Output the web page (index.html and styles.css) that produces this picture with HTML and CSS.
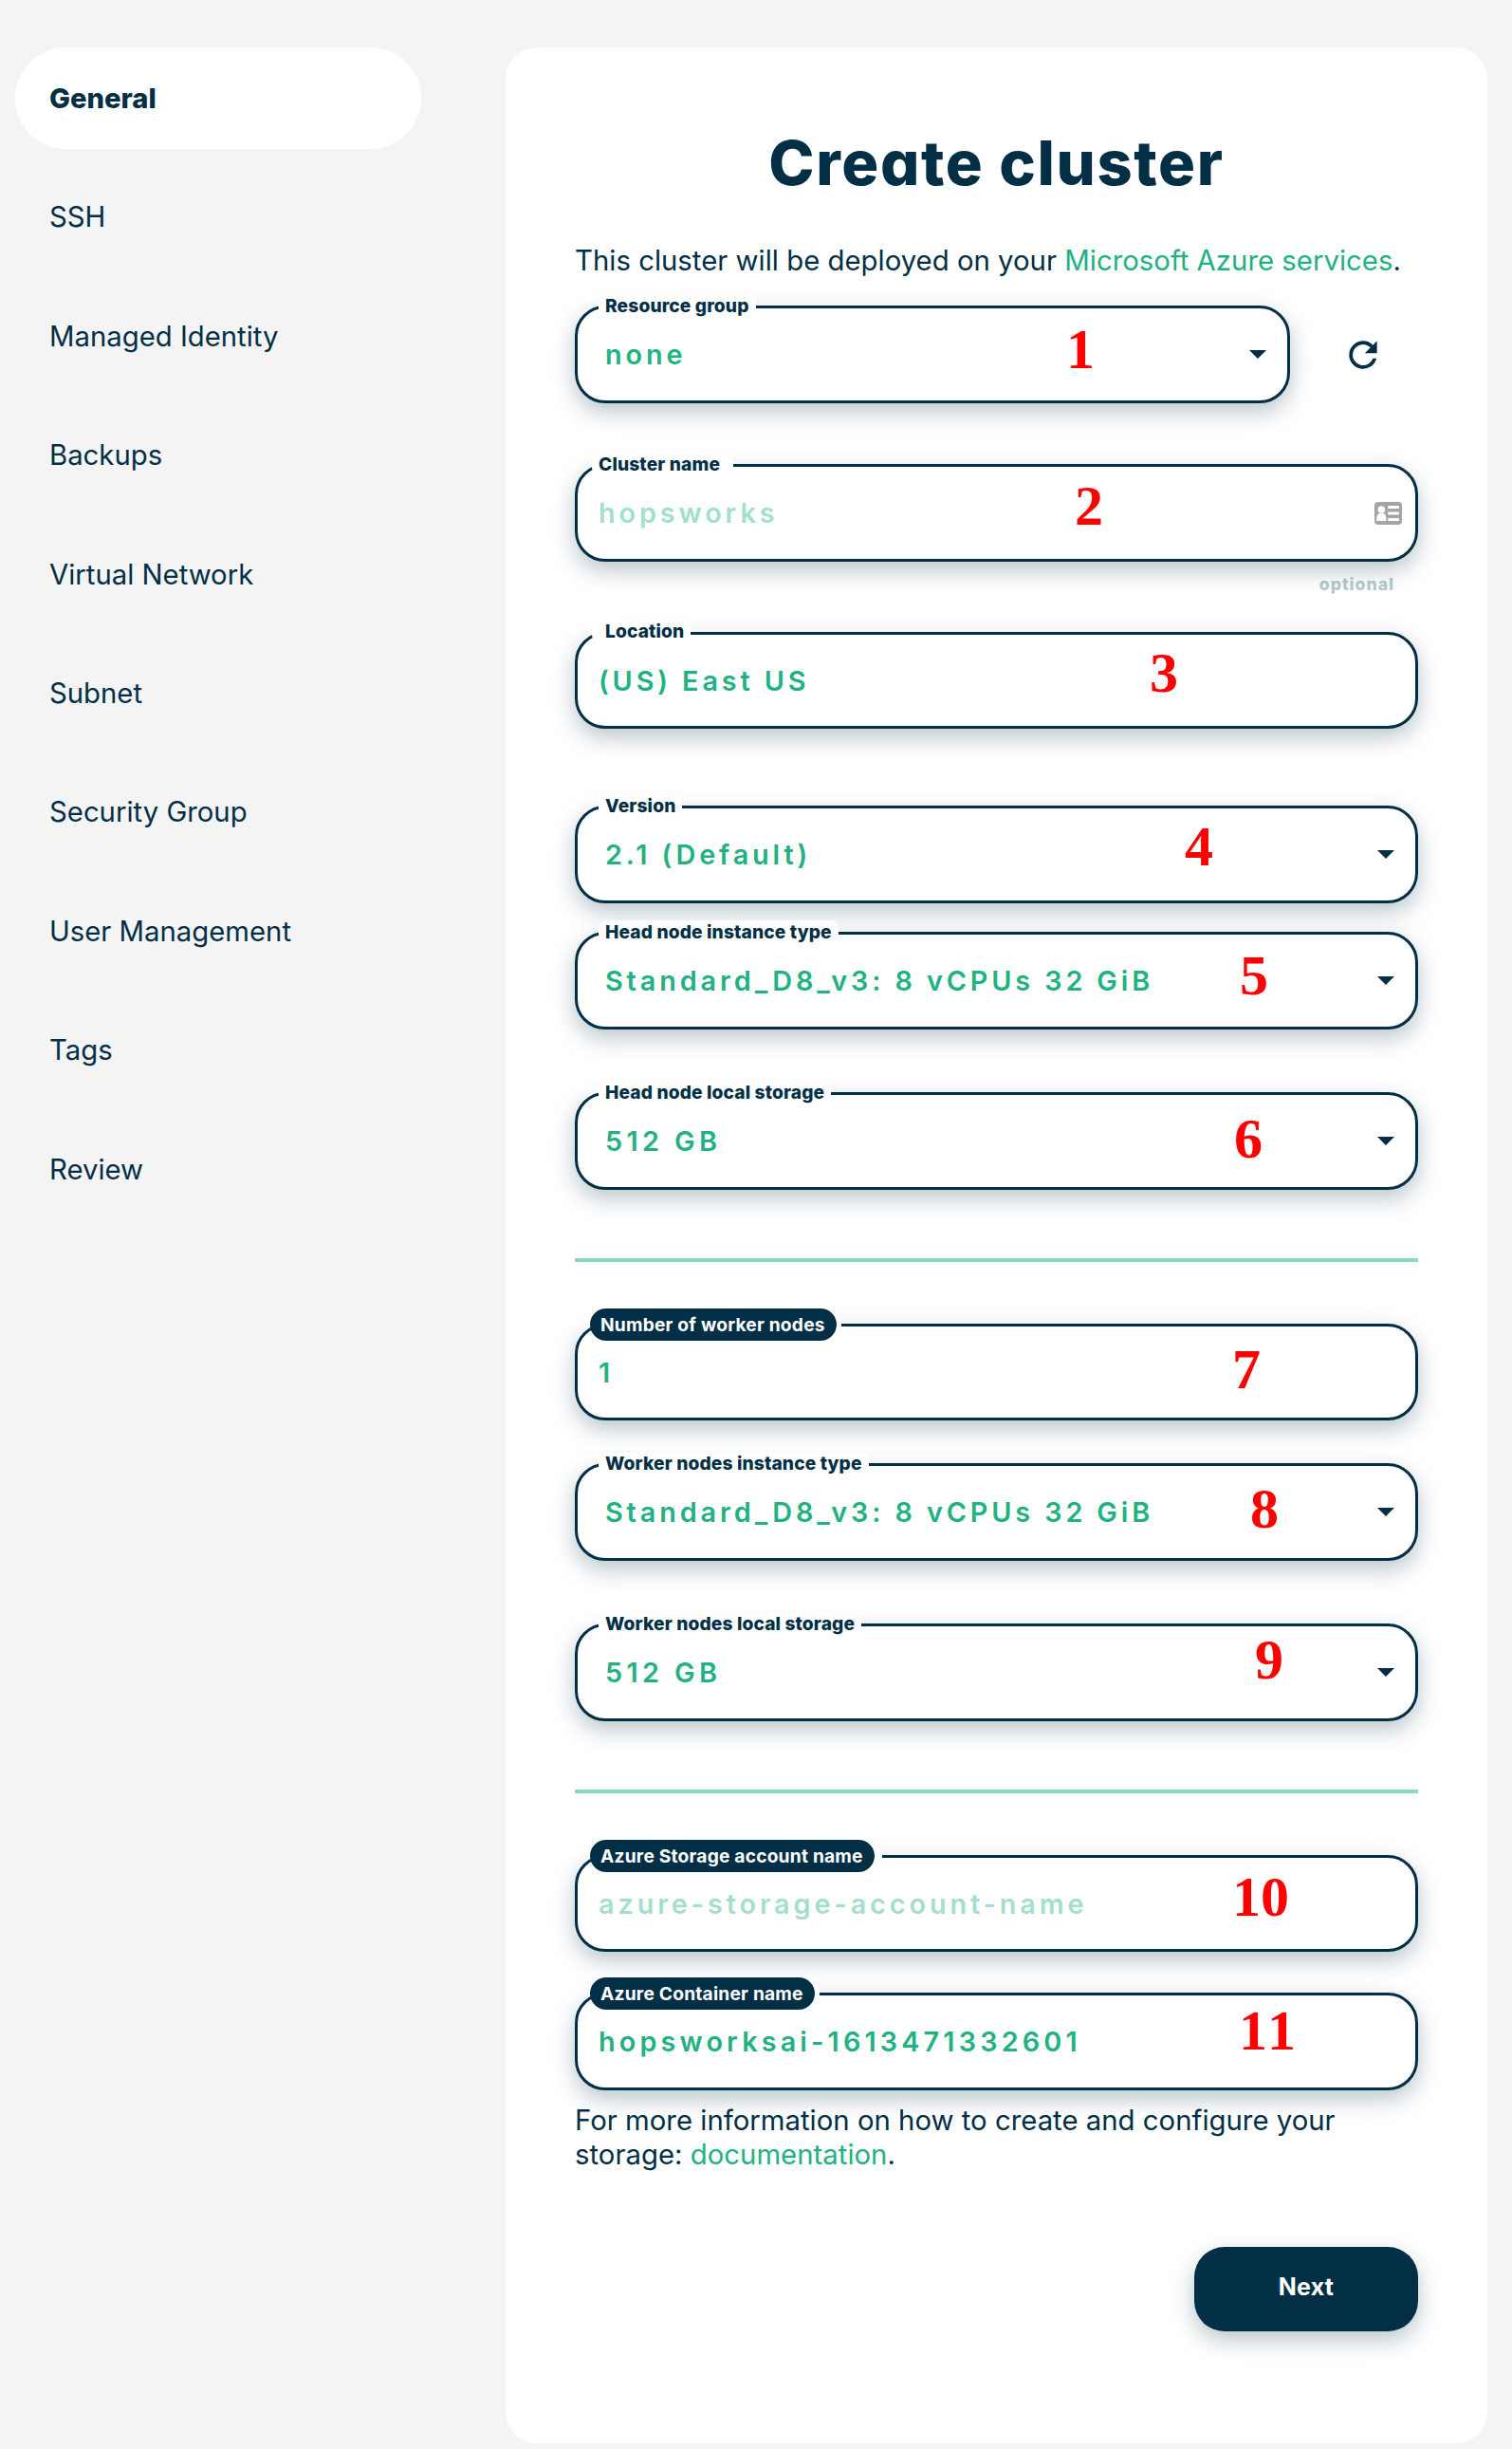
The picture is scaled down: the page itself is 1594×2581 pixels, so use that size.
FILE: index.html
```html
<!DOCTYPE html>
<html lang="en">
<head>
<meta charset="utf-8">
<title>Create cluster</title>
<link rel="stylesheet" href="styles.css">
</head>
<body>
<div class="page">
  <nav class="steps">
    <a class="step active">General</a>
    <a class="step">SSH</a>
    <a class="step">Managed Identity</a>
    <a class="step">Backups</a>
    <a class="step">Virtual Network</a>
    <a class="step">Subnet</a>
    <a class="step">Security Group</a>
    <a class="step">User Management</a>
    <a class="step">Tags</a>
    <a class="step">Review</a>
  </nav>
  <main class="card">
    <h1 class="title">Create cluster</h1>
    <p class="intro">This cluster will be deployed on your <a class="link">Microsoft Azure services</a>.</p>

    <div class="row">
      <div class="field select">
        <span class="label">Resource group</span>
        <span class="value">none</span>
        <svg class="caret" viewBox="0 0 18 9"><path d="M0 0h18L9 9z"/></svg>
        <span class="marker m1">1</span>
      </div>
      <svg class="refresh" viewBox="0 0 24 24"><path d="M17.65 6.35A7.96 7.96 0 0 0 12 4a8 8 0 1 0 7.73 10h-2.08A6 6 0 1 1 12 6c1.66 0 3.14.69 4.22 1.78L13 11h7V4z"/></svg>
    </div>

    <div class="field gap-64">
      <span class="label label-name">Cluster name</span>
      <span class="value placeholder">hopsworks</span>
      <svg class="contact" viewBox="0 0 29 24">
        <rect width="29" height="24" rx="4" fill="#a5a5a5"/>
        <circle cx="7.3" cy="8" r="3.8" fill="#fff"/>
        <path d="M2.3 20v-3c0-3 1.6-5 3.4-5h3.2c1.800 0 3.400 2 3.400 5v3z" fill="#fff"/>
        <path d="M14.300 4h11.500v3H14.300zM14.300 10.500h11.500v3H14.300zM14.300 17h11.500v3H14.300z" fill="#fff"/>
      </svg>
      <span class="marker m2">2</span>
    </div>
    <div class="hint">optional</div>

    <div class="field low gap-38">
      <span class="label label-location">Location</span>
      <span class="value">(US) East US</span>
      <span class="marker m3">3</span>
    </div>

    <div class="field select gap-81">
      <span class="label">Version</span>
      <span class="value">2.1 (Default)</span>
      <svg class="caret" viewBox="0 0 18 9"><path d="M0 0h18L9 9z"/></svg>
      <span class="marker m4">4</span>
    </div>
    <div class="field select gap-30">
      <span class="label">Head node instance type</span>
      <span class="value">Standard_D8_v3: 8 vCPUs 32 GiB</span>
      <svg class="caret" viewBox="0 0 18 9"><path d="M0 0h18L9 9z"/></svg>
      <span class="marker m5">5</span>
    </div>
    <div class="field select gap-66">
      <span class="label">Head node local storage</span>
      <span class="value wide">512 GB</span>
      <svg class="caret" viewBox="0 0 18 9"><path d="M0 0h18L9 9z"/></svg>
      <span class="marker m6">6</span>
    </div>

    <hr class="rule">

    <div class="field low gap-65">
      <span class="label pill">Number of worker nodes</span>
      <span class="value">1</span>
      <span class="marker m7">7</span>
    </div>
    <div class="field select gap-45">
      <span class="label">Worker nodes instance type</span>
      <span class="value">Standard_D8_v3: 8 vCPUs 32 GiB</span>
      <svg class="caret" viewBox="0 0 18 9"><path d="M0 0h18L9 9z"/></svg>
      <span class="marker m8">8</span>
    </div>
    <div class="field select gap-66">
      <span class="label">Worker nodes local storage</span>
      <span class="value wide">512 GB</span>
      <svg class="caret" viewBox="0 0 18 9"><path d="M0 0h18L9 9z"/></svg>
      <span class="marker m9">9</span>
    </div>

    <hr class="rule">

    <div class="field low gap-65">
      <span class="label pill pill-far">Azure Storage account name</span>
      <span class="value placeholder">azure-storage-account-name</span>
      <span class="marker m10">10</span>
    </div>
    <div class="field gap-43">
      <span class="label pill">Azure Container name</span>
      <span class="value strong">hopsworksai-1613471332601</span>
      <span class="marker m11">11</span>
    </div>

    <p class="more">For more information on how to create and configure your storage: <a class="link">documentation</a>.</p>
    <button class="next" type="button">Next</button>
  </main>
</div>
</body>
</html>
```
FILE: styles.css
```css
* { box-sizing: border-box; }
body {
  margin: 0;
  background: #f4f4f4;
  color: #022f46;
  font-family: Inter, sans-serif;
}
.page {
  display: flex;
  align-items: flex-start;
  gap: 89px;
  padding: 50px 26px 6px 16px;
}

/* Wizard steps */
.steps {
  display: flex;
  flex-direction: column;
  gap: 18.4px;
  width: 428px;
  flex: none;
}
.step {
  height: 107px;
  padding-left: 36px;
  border-radius: 54px;
  font-size: 29.3px;
  font-weight: 400;
  line-height: 107px;
}
.step.active { background: #fff; font-size: 29.2px; font-weight: 800; }

/* Form card */
.card {
  display: flex;
  flex-direction: column;
  width: 1035px;
  height: 2525px;
  padding: 82px 73px 0;
  border-radius: 33px;
  background: #fff;
}
.title {
  margin: 0;
  font-size: 65px;
  font-weight: 800;
  line-height: 80px;
  letter-spacing: 1.6px;
  text-align: center;
  font-feature-settings: "cv11";
}
.intro, .more {
  margin: 0;
  font-size: 29.35px;
  font-weight: 400;
}
.intro { margin: 45px 0 29px; line-height: 36px; white-space: nowrap; }
.more { margin-top: 14px; line-height: 35.5px; }
.link { color: #21b182; }

.row { display: flex; align-items: center; gap: 55px; }
.row .field { width: 754px; }

.field {
  position: relative;
  display: flex;
  align-items: center;
  justify-content: space-between;
  flex: none;
  height: 103px;
  padding: 0 14px 0 22px;
  border: 3px solid #022f46;
  border-radius: 32px;
  background: #fff;
  box-shadow: 0 9px 24px rgba(2, 47, 70, 0.28);
}
.field.select { padding: 0 22px 0 29px; }
.field.low { height: 102px; padding-top: 1px; }

.gap-30 { margin-top: 30px; }
.gap-38 { margin-top: 38px; }
.gap-43 { margin-top: 43px; }
.gap-45 { margin-top: 45px; }
.gap-64 { margin-top: 64px; }
.gap-65 { margin-top: 65px; }
.gap-66 { margin-top: 66px; }
.gap-81 { margin-top: 81px; }

.label {
  position: absolute;
  top: -15px;
  left: 22px;
  padding: 0 7px;
  border-radius: 8px;
  background: #fff;
  font-size: 19.2px;
  font-weight: 800;
  line-height: 24px;
  letter-spacing: 0.12px;
  white-space: nowrap;
}
.label-name { left: 15px; padding-right: 14px; }
.label-location { top: -16px; left: 15px; padding-left: 14px; }
.label.pill {
  top: -19px;
  left: 13px;
  padding: 0 12px 0 11px;
  border-radius: 17px;
  background: #022f46;
  box-shadow: 5px 0 0 #fff;
  color: #fff;
  font-weight: 700;
  line-height: 34px;
  letter-spacing: 0.2px;
}
.label.pill-far { box-shadow: 8px 0 0 #fff; }

.value {
  color: #21b182;
  font-size: 28.8px;
  font-weight: 600;
  line-height: 36px;
  letter-spacing: 3.88px;
  white-space: nowrap;
}
.value.wide { letter-spacing: 4.4px; }
.value.strong { letter-spacing: 4.15px; }
.value.placeholder { color: #a3dfcb; letter-spacing: 3.9px; }

.caret { width: 18px; height: 9px; fill: #022f46; }
.refresh { width: 44px; height: 44px; fill: #022f46; }
.contact { width: 29px; height: 24px; }

.hint {
  margin-top: 12px;
  padding-right: 25px;
  color: #b6cacd;
  font-size: 17.6px;
  font-weight: 800;
  line-height: 24px;
  letter-spacing: 1px;
  text-align: right;
}
.rule {
  flex: none;
  width: 100%;
  height: 4px;
  margin: 72px 0 0;
  border: 0;
  background: #8dd7bd;
}
.next {
  align-self: flex-end;
  flex: none;
  width: 236px;
  height: 89px;
  margin-top: 80px;
  padding: 0 0 5px;
  border: 0;
  border-radius: 32px;
  background: #022f46;
  box-shadow: 0 9px 24px rgba(2, 47, 70, 0.28);
  color: #fff;
  font: 700 25px Inter, sans-serif;
  letter-spacing: 0.2px;
}

/* Numbered callouts laid over the fields */
.marker {
  position: absolute;
  transform: translateX(-50%);
  color: #f00;
  font: bold 60px/60px "Liberation Serif", serif;
  font-kerning: none;
}
.m1 { top: 13px; left: 530px; }
.m2 { top: 11px; left: 539px; }
.m3 { top: 10px; left: 618px; }
.m4 { top: 10px; left: 655px; }
.m5 { top: 13px; left: 713px; }
.m6 { top: 16px; left: 707px; }
.m7 { top: 15px; left: 705px; }
.m8 { top: 15px; left: 724px; }
.m9 { top: 5px; left: 729px; }
.m10 { top: 11px; left: 720px; }
.m11 { top: 7px; left: 727px; }
```
